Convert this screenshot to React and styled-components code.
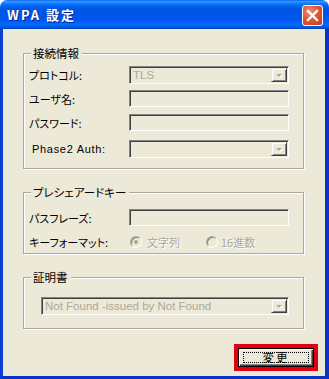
import styled, { createGlobalStyle } from "styled-components";

const GlobalStyle = createGlobalStyle`
  html, body {
    margin: 0;
    padding: 0;
    background: #ffffff;
  }
  * {
    box-sizing: border-box;
  }
`;

const Window = styled.div`
  display: flex;
  flex-direction: column;
  width: 329px;
  height: 379px;
  font-family: "Noto Sans CJK JP", "Liberation Sans", sans-serif;
  font-size: 11px;
  font-feature-settings: "palt";
  color: #000;
`;

const TitleBar = styled.div`
  display: flex;
  align-items: center;
  justify-content: space-between;
  height: 29px;
  padding: 0 6px 0 7px;
  border-radius: 7px 7px 0 0;
  background: linear-gradient(
    to bottom,
    #0058ee 0%,
    #3a93ff 4%,
    #288eff 8%,
    #127dff 12%,
    #036ffc 16%,
    #0262ee 22%,
    #0057e5 30%,
    #0054e3 40%,
    #0055eb 60%,
    #005bf5 72%,
    #026afe 82%,
    #0062ef 90%,
    #0052d6 96%,
    #0040ab 100%
  );
`;

const Title = styled.span`
  color: #fff;
  font-weight: 700;
  font-size: 13px;
  font-feature-settings: normal;
  letter-spacing: 2px;
  text-shadow: 1px 1px 0 #0a1e8a;
  line-height: 29px;
`;

const CloseButton = styled.div`
  display: flex;
  align-items: center;
  justify-content: center;
  width: 21px;
  height: 21px;
  margin-top: 1px;
  border: 1px solid #fff;
  border-radius: 3px;
  background: radial-gradient(circle at 35% 30%, #f0907a 0%, #e2552f 45%, #c83c1c 100%);
`;

const Body = styled.div`
  display: flex;
  flex-direction: column;
  flex: 1;
  background: #ece9d8;
  border-left: 3px solid #0841d0;
  border-right: 4px solid #0734c7;
  border-bottom: 3px solid #0734c7;
  padding: 24px 0 0 20px;
`;

const Group = styled.div`
  position: relative;
  width: 281px;
  height: ${(p) => p.$h}px;
  margin-bottom: ${(p) => p.$mb || 0}px;
  padding: ${(p) => p.$pad};
  border: 1px solid #aca899;
  box-shadow: inset 1px 1px 0 #fff, 1px 1px 0 #fff;
  display: flex;
  flex-direction: column;
`;

const Legend = styled.span`
  position: absolute;
  top: -9px;
  left: 7px;
  padding: 0 3px 0 2px;
  background: #ece9d8;
  line-height: 16px;
  font-size: 11.5px;
`;

const Row = styled.div`
  display: flex;
  align-items: center;
  margin-top: ${(p) => p.$mt || 0}px;
`;

const Label = styled.span`
  width: 105px;
  padding-left: ${(p) => p.$indent || 5}px;
  white-space: nowrap;
  ${(p) =>
    p.$latin &&
    `
    font-family: "Liberation Sans", sans-serif;
    letter-spacing: 0.7px;
  `}
`;

const Sunken = styled.div`
  position: relative;
  display: flex;
  align-items: center;
  width: ${(p) => p.$w || 160}px;
  height: ${(p) => p.$h || 17}px;
  border-top: 1px solid #848284;
  border-left: 1px solid #848284;
  border-right: 1px solid #fff;
  border-bottom: 1px solid #fff;
  box-shadow: inset 1px 1px 0 #424142, inset -1px -1px 0 #ece9d8;
  background: #ece9d8;
  color: #aca899;
  padding-left: 3px;
  font-family: "Liberation Sans", "Noto Sans CJK JP", sans-serif;
  font-size: 11.5px;
`;

const DropButton = styled.div`
  position: absolute;
  right: 1px;
  top: 1px;
  bottom: 1px;
  width: 16px;
  display: flex;
  align-items: center;
  justify-content: center;
  background: #ece9d8;
  border-top: 1px solid #ece9d8;
  border-left: 1px solid #ece9d8;
  border-right: 1px solid #424142;
  border-bottom: 1px solid #424142;
  box-shadow: inset 1px 1px 0 #fff, inset -1px -1px 0 #848284;
`;

const Arrow = styled.div`
  width: 0;
  height: 0;
  border-left: 3px solid transparent;
  border-right: 3px solid transparent;
  border-top: 3px solid #aca899;
  filter: drop-shadow(1px 1px 0 #fff);
`;

const RadioGroup = styled.div`
  display: flex;
  align-items: center;
`;

const Radio = styled.div`
  display: flex;
  align-items: center;
  width: ${(p) => p.$w}px;
  padding-left: 1px;
  color: #aca899;
  text-shadow: 1px 1px 0 #fff;
`;

const RadioCircle = styled.span`
  position: relative;
  width: 12px;
  height: 12px;
  margin-right: ${(p) => p.$gap}px;
  border-radius: 50%;
  border: 1px solid #aca899;
  border-right-color: #fff;
  border-bottom-color: #fff;
  box-shadow: inset 1px 1px 0 #848284;
  background: #ece9d8;
  &::after {
    content: "";
    display: ${(p) => (p.$checked ? "block" : "none")};
    position: absolute;
    left: 3px;
    top: 3px;
    width: 4px;
    height: 4px;
    border-radius: 50%;
    background: #aca899;
  }
`;

const Footer = styled.div`
  display: flex;
  justify-content: flex-end;
  margin-top: 15px;
  padding-right: 7px;
`;

const Highlight = styled.div`
  border: 4px solid #e00010;
`;

const Button = styled.div`
  display: flex;
  align-items: center;
  justify-content: center;
  width: 76px;
  height: 19px;
  border: 1px solid #000;
  background: #ece9d8;
  box-shadow: inset 1px 1px 0 #fff, inset -1px -1px 0 #424142, inset -2px -2px 0 #848284;
`;

const FocusRing = styled.div`
  display: flex;
  align-items: center;
  justify-content: center;
  width: 66px;
  height: 11px;
  border: 1px dotted #000;
  line-height: 11px;
  letter-spacing: 2px;
  font-size: 11.5px;
`;

function Combo({ value, w, h }) {
  return (
    <Sunken $w={w} $h={h || 18}>
      {value}
      <DropButton>
        <Arrow />
      </DropButton>
    </Sunken>
  );
}

export default function App() {
  return (
    <>
      <GlobalStyle />
      <Window>
        <TitleBar>
          <Title>WPA 設定</Title>
          <CloseButton>
            <svg width="13" height="13" viewBox="0 0 13 13">
              <path d="M2 2 L11 11 M11 2 L2 11" stroke="#fff" strokeWidth="2.4" strokeLinecap="square" />
            </svg>
          </CloseButton>
        </TitleBar>
        <Body>
          <Group $h={116} $mb={23} $pad="12px 0 0 0">
            <Legend>接続情報</Legend>
            <Row>
              <Label>プロトコル:</Label>
              <Combo value="TLS" />
            </Row>
            <Row $mt={6}>
              <Label>ユーザ名:</Label>
              <Sunken />
            </Row>
            <Row $mt={7}>
              <Label>パスワード:</Label>
              <Sunken />
            </Row>
            <Row $mt={9}>
              <Label $indent={8} $latin>
                Phase2 Auth:
              </Label>
              <Combo />
            </Row>
          </Group>

          <Group $h={62} $mb={23} $pad="16px 0 0 0">
            <Legend>プレシェアードキー</Legend>
            <Row>
              <Label>パスフレーズ:</Label>
              <Sunken />
            </Row>
            <Row $mt={8}>
              <Label>キーフォーマット:</Label>
              <RadioGroup>
                <Radio $w={76}>
                  <RadioCircle $checked $gap={5} />
                  文字列
                </Radio>
                <Radio $w={80}>
                  <RadioCircle $gap={3} />
                  16進数
                </Radio>
              </RadioGroup>
            </Row>
          </Group>

          <Group $h={52} $pad="19px 0 0 17px">
            <Legend>証明書</Legend>
            <Combo value="Not Found -issued by Not Found" w={248} />
          </Group>

          <Footer>
            <Highlight>
              <Button>
                <FocusRing>変更</FocusRing>
              </Button>
            </Highlight>
          </Footer>
        </Body>
      </Window>
    </>
  );
}
